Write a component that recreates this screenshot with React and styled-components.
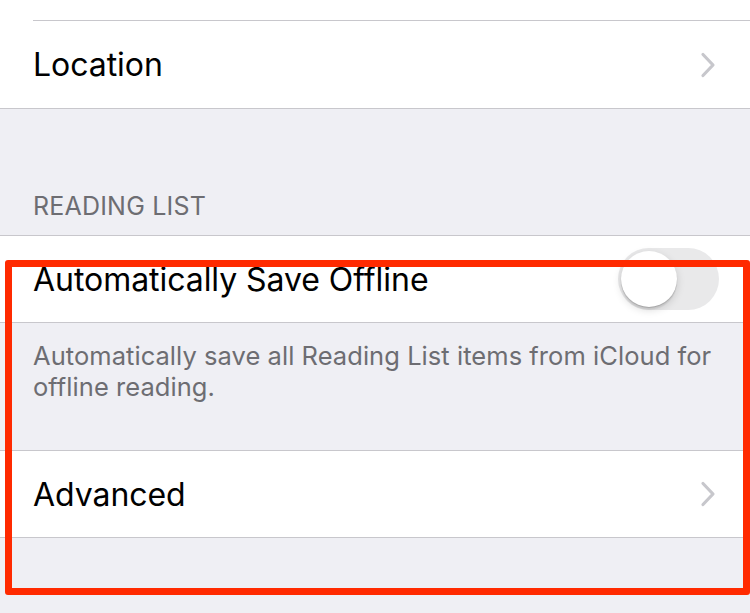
import React from "react";
import styled, { createGlobalStyle } from "styled-components";

const Global = createGlobalStyle`
  html, body { margin: 0; padding: 0; background: #efeff4; }
  body { font-family: Inter, "Liberation Sans", Arial, sans-serif; -webkit-font-smoothing: antialiased; }
`;

const Screen = styled.div`
  position: relative;
  width: 750px;
  height: 613px;
  overflow: hidden;
  background: #efeff4;
`;

const Group = styled.div`
  background: #ffffff;
  border-top: ${(p) => (p.$noTop ? "none" : "1px solid #c8c7cc")};
  border-bottom: 1px solid #c8c7cc;
`;

const Tail = styled.div`
  height: 20px;
`;

const Cell = styled.div`
  display: flex;
  align-items: center;
  justify-content: space-between;
  height: ${(p) => p.$h || 86}px;
  padding: 0 33px 0 33px;
  margin-left: ${(p) => (p.$inset ? 33 : 0)}px;
  padding-left: ${(p) => (p.$inset ? 0 : 33)}px;
  border-top: ${(p) => (p.$inset ? "1px solid #c8c7cc" : "none")};
`;

const Label = styled.span`
  font-size: 32px;
  color: #000;
  letter-spacing: -0.05px;
`;

const SectionHeader = styled.div`
  padding: 82px 33px 14px;
  font-size: 25px;
  line-height: 30px;
  color: #6d6d72;
  letter-spacing: 0.2px;
`;

const Footer = styled.div`
  height: 127px;
  box-sizing: border-box;
  padding: 17px 33px 0;
  font-size: 25.5px;
  line-height: 31px;
  color: #6d6d72;
  letter-spacing: 0.05px;
`;

const Track = styled.div`
  width: 101px;
  height: 62px;
  border-radius: 31px;
  background: #e9e9ea;
  position: relative;
  margin-right: -2px;
`;

const Knob = styled.div`
  position: absolute;
  left: 3px;
  top: 3px;
  width: 56px;
  height: 56px;
  border-radius: 50%;
  background: #fff;
  box-shadow: 0 3px 8px rgba(0, 0, 0, 0.15), 0 1px 1px rgba(0, 0, 0, 0.16), 0 3px 1px rgba(0, 0, 0, 0.06);
`;

const Chevron = () => (
  <svg width="16" height="26" viewBox="0 0 16 26" style={{ marginRight: 1 }}>
    <path d="M3 2.5 L13 13 L3 23.5" fill="none" stroke="#c7c7cc" strokeWidth="3.2" strokeLinecap="round" strokeLinejoin="round" />
  </svg>
);

const Highlight = styled.div`
  position: absolute;
  left: 5px;
  top: 260px;
  width: 745px;
  height: 335px;
  box-sizing: border-box;
  border: 7px solid #ff2a00;
  border-radius: 3px;
  pointer-events: none;
`;

export default function App() {
  return (
    <>
      <Global />
      <Screen>
        <Group $noTop>
          <Tail />
          <Cell $inset $h={87}>
            <Label>Location</Label>
            <Chevron />
          </Cell>
        </Group>
        <SectionHeader>READING LIST</SectionHeader>
        <Group>
          <Cell $h={86}>
            <Label>Automatically Save Offline</Label>
            <Track>
              <Knob />
            </Track>
          </Cell>
        </Group>
        <Footer>
          Automatically save all Reading List items from iCloud for offline reading.
        </Footer>
        <Group>
          <Cell $h={86}>
            <Label>Advanced</Label>
            <Chevron />
          </Cell>
        </Group>
        <Highlight />
      </Screen>
    </>
  );
}
